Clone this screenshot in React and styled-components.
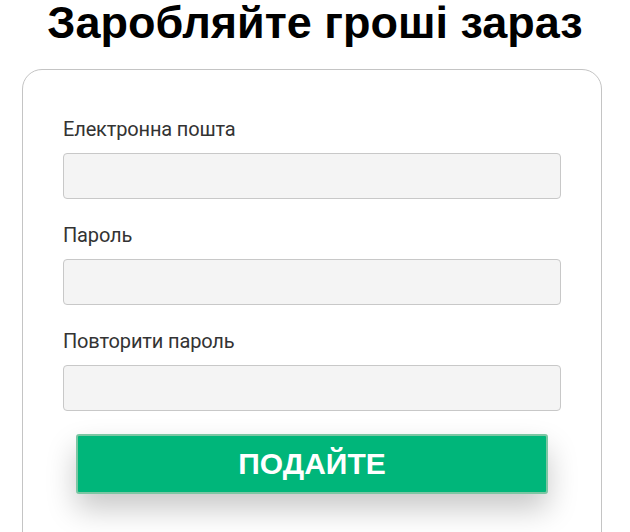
import React from "react";
import styled, { createGlobalStyle } from "styled-components";

const Global = createGlobalStyle`
  html, body { margin: 0; padding: 0; background: #fff; }
  body { font-family: "Liberation Sans", Arial, sans-serif; }
  * { box-sizing: border-box; }
`;

const Page = styled.div`
  width: 630px;
  height: 532px;
  overflow: hidden;
  display: flex;
  flex-direction: column;
`;

const Title = styled.h1`
  margin: 0;
  font-family: "Liberation Sans", Arial, sans-serif;
  font-weight: 700;
  font-size: 45px;
  line-height: 45px;
  color: #000;
  text-align: center;
  width: 100%;
`;

const Card = styled.form`
  margin: 24px 0 0 22px;
  width: 580px;
  flex-shrink: 0;
  border: 1px solid #c4c4c4;
  border-radius: 20px;
  padding: 47px 40px 80px 40px;
  display: flex;
  flex-direction: column;
`;

const Field = styled.div`
  display: flex;
  flex-direction: column;
  margin-bottom: 24px;
`;

const Label = styled.label`
  font-family: Roboto, "Liberation Sans", Arial, sans-serif;
  font-size: 20px;
  letter-spacing: -0.15px;
  line-height: 24px;
  color: #333;
  margin-bottom: 12px;
`;

const Input = styled.input`
  height: 46px;
  width: 100%;
  background: #f4f4f4;
  border: 1px solid #c8c8c8;
  border-radius: 4px;
  padding: 0 12px;
  font-size: 16px;
  outline: none;
`;

const Button = styled.button`
  align-self: center;
  margin-top: -1px;
  width: 472px;
  height: 60px;
  background: #00b67a;
  border: 2px solid #7cc6a3;
  border-radius: 3px;
  color: #fff;
  font-family: "Liberation Sans", Arial, sans-serif;
  font-weight: 700;
  font-size: 30px;
  cursor: pointer;
  box-shadow: 0 15px 30px rgba(0, 0, 0, 0.22);
`;

const fields = ["Електронна пошта", "Пароль", "Повторити пароль"];

export default function App() {
  return (
    <Page>
      <Global />
      <Title>Заробляйте гроші зараз</Title>
      <Card onSubmit={(e) => e.preventDefault()}>
        {fields.map((f) => (
          <Field key={f}>
            <Label>{f}</Label>
            <Input type={f === "Електронна пошта" ? "email" : "password"} />
          </Field>
        ))}
        <Button type="submit">ПОДАЙТЕ</Button>
      </Card>
    </Page>
  );
}
